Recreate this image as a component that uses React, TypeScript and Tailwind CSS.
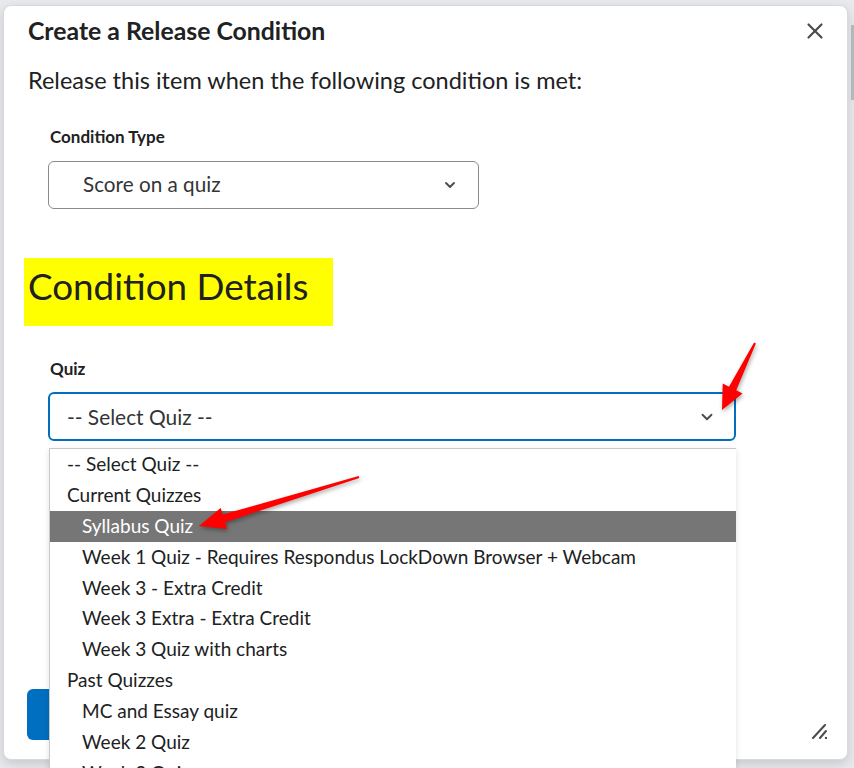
import { ChevronDown, X } from 'lucide-react'

const OPTIONS: { label: string; kind: 'top' | 'group' | 'item'; active?: boolean }[] = [
  { label: '-- Select Quiz --', kind: 'top' },
  { label: 'Current Quizzes', kind: 'group' },
  { label: 'Syllabus Quiz', kind: 'item', active: true },
  { label: 'Week 1 Quiz - Requires Respondus LockDown Browser + Webcam', kind: 'item' },
  { label: 'Week 3 - Extra Credit', kind: 'item' },
  { label: 'Week 3 Extra - Extra Credit', kind: 'item' },
  { label: 'Week 3 Quiz with charts', kind: 'item' },
  { label: 'Past Quizzes', kind: 'group' },
  { label: 'MC and Essay quiz', kind: 'item' },
  { label: 'Week 2 Quiz', kind: 'item' },
  { label: 'Week 3 Quiz', kind: 'item' },
]

function QuizMenu() {
  return (
    <ul className="absolute left-[49px] top-[448px] w-[687px] bg-white border-t border-l border-[#c9c9c9] shadow-[0_2px_6px_rgba(0,0,0,0.12)]">
      {OPTIONS.map((o) => (
        <li
          key={o.label}
          className={`h-[30.9px] leading-[30px] text-[19px] whitespace-nowrap ${
            o.kind === 'item' ? 'pl-[32px]' : 'pl-[17px]'
          } ${o.active ? 'bg-[#767676] text-white' : 'text-[#202122]'}`}
        >
          {o.label}
        </li>
      ))}
    </ul>
  )
}

function Arrows() {
  return (
    <svg
      className="absolute left-0 top-0 pointer-events-none drop-shadow-[1px_2px_2px_rgba(0,0,0,0.35)]"
      width="854"
      height="768"
      viewBox="0 0 854 768"
    >
      <polygon
        fill="#ff0000"
        points="754.1,342.6 755.9,343.4 736.2,390.3 742.5,393.4 722,410 722.7,383.6 729,386.7"
      />
      <polygon
        fill="#ff0000"
        points="358.7,476 359.3,478 225.1,522.2 227.1,528.9 199,526 220.7,507.9 222.7,514.6"
      />
    </svg>
  )
}

export default function App() {
  return (
    <div className="relative w-[854px] h-[768px] overflow-hidden bg-[#e8eaed] font-['Lato',sans-serif] text-[#202122]">
      <div className="absolute right-0 top-[25px] w-[3px] h-[75px] bg-[#b9bec6]" />

      <div className="relative ml-[3px] pt-[5px]">
        <section className="relative flex flex-col w-[845px] h-[755px] bg-white rounded-lg border border-[#d6dae0] shadow-[0_4px_12px_rgba(0,0,0,0.15)] px-[24px]">
          <header className="flex items-center justify-between pt-[10px] h-[40px]">
            <h1 className="text-[24.8px] leading-[30px] font-bold">Create a Release Condition</h1>
            <X className="w-[26px] h-[26px] text-[#494c4e] -mr-[5px]" strokeWidth={2} />
          </header>

          <p className="mt-[19px] text-[23.5px] leading-[30px]">
            Release this item when the following condition is met:
          </p>

          <div className="pl-[22px]">
            <div className="mt-[32px] text-[17px] leading-[20px] font-bold">Condition Type</div>
            <div className="mt-[14px] -ml-[2px] flex items-center justify-between w-[431px] h-[48px] rounded-md border border-[#868c8f] pl-[34px] pr-[20px]">
              <span className="text-[20.7px] text-[#333536]">Score on a quiz</span>
              <ChevronDown className="w-[16px] h-[16px] text-[#494c4e]" strokeWidth={2.8} />
            </div>
          </div>

          <div className="mt-[49px] -ml-[4px] w-[309px] h-[68px] bg-[#ffff00] pl-[4px] pt-[6px]">
            <h2 className="text-[36.8px] leading-[44px]">Condition Details</h2>
          </div>

          <div className="pl-[22px]">
            <div className="mt-[33px] text-[17px] leading-[20px] font-bold">Quiz</div>
            <div className="mt-[13px] -ml-[2px] flex items-center justify-between w-[688px] h-[49px] rounded-md border-2 border-[#006fbf] pl-[17px] pr-[18px]">
              <span className="text-[20.9px] text-[#333536]">-- Select Quiz --</span>
              <ChevronDown className="w-[18px] h-[18px] text-[#494c4e]" strokeWidth={2.5} />
            </div>
          </div>

          <div className="mt-auto pb-[19px] -ml-[1px]">
            <button aria-label="Create" className="block h-[51px] w-[110px] rounded-md bg-[#006fbf]" />
          </div>

          <svg className="absolute right-[20px] bottom-[20px]" width="16" height="16" viewBox="0 0 16 16">
            <path d="M2 15 L14 2" stroke="#494c4e" strokeWidth="2" strokeLinecap="round" />
            <path d="M9 15 L15 8" stroke="#494c4e" strokeWidth="2" strokeLinecap="round" />
            <circle cx="15" cy="15" r="1.2" fill="#494c4e" />
          </svg>
        </section>
      </div>

      <QuizMenu />
      <Arrows />
    </div>
  )
}
